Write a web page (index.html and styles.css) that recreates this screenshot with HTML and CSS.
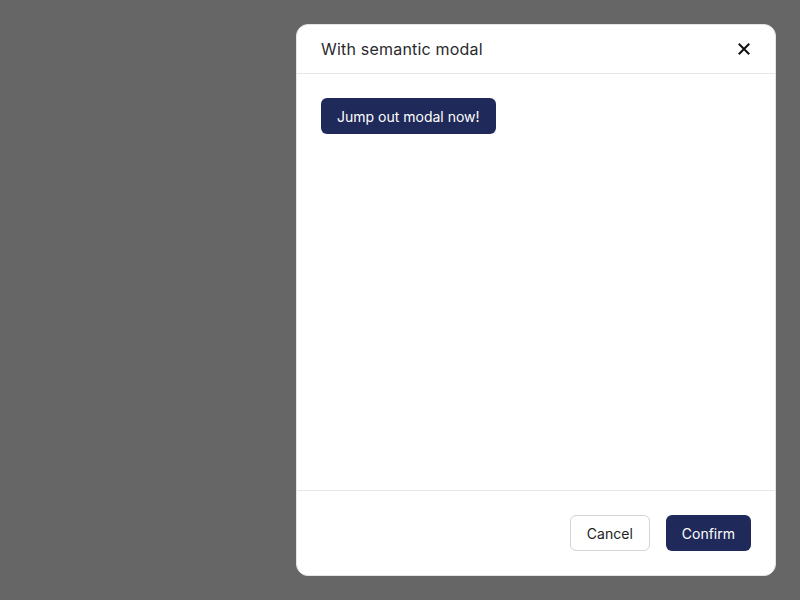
FILE: index.html
```html
<!DOCTYPE html>
<html>
<head>
<meta charset="utf-8">
<link rel="stylesheet" href="styles.css">
</head>
<body>
<div class="overlay">
  <div class="modal" role="dialog" aria-labelledby="modal-title">
    <header class="modal-header">
      <h2 id="modal-title" class="modal-title">With semantic modal</h2>
      <button class="close-btn" aria-label="Close">
        <svg width="12" height="12" viewBox="0 0 12 12"><path d="M1.5 1.5 L10.5 10.5 M10.5 1.5 L1.5 10.5" stroke="#111" stroke-width="2" stroke-linecap="square"/></svg>
      </button>
    </header>
    <div class="modal-body">
      <button class="btn btn-primary">Jump out modal now!</button>
    </div>
    <footer class="modal-footer">
      <button class="btn btn-secondary">Cancel</button>
      <button class="btn btn-primary">Confirm</button>
    </footer>
  </div>
</div>
</body>
</html>
```
FILE: styles.css
```css
html, body {
  margin: 0;
  padding: 0;
  height: 100%;
}
body {
  background: #666666;
  font-family: Inter, "Noto Sans", sans-serif;
}
.overlay {
  display: flex;
  justify-content: flex-end;
  padding: 24px;
  height: 100%;
  box-sizing: border-box;
}
.modal {
  width: 480px;
  height: 552px;
  box-sizing: border-box;
  background: #fff;
  border: 1px solid #e3e3e8;
  border-radius: 12px;
  display: flex;
  flex-direction: column;
}
.modal-header {
  display: flex;
  align-items: center;
  justify-content: space-between;
  height: 48px;
  padding: 0 24px;
  border-bottom: 1px solid #e6e6ea;
}
.modal-title {
  margin: 0;
  font-size: 16px;
  font-weight: 400;
  letter-spacing: 0.2px;
  color: #2a2a2e;
}
.close-btn {
  background: none;
  border: 0;
  padding: 0;
  width: 12px;
  height: 12px;
  display: flex;
  margin-right: 1px;
}
.modal-body {
  flex: 1;
  padding: 24px;
}
.modal-footer {
  display: flex;
  justify-content: flex-end;
  gap: 16px;
  padding: 24px;
  border-top: 1px solid #e6e6ea;
}
.btn {
  height: 36px;
  padding: 0 16px;
  border-radius: 6px;
  font-family: Inter, "Noto Sans", sans-serif;
  font-size: 14px;
  font-weight: 400;
  cursor: pointer;
}
.btn-primary {
  background: #1f2a5a;
  color: #fff;
  border: 0;
}
.btn-secondary {
  background: #fff;
  color: #222;
  border: 1px solid #d4d4d8;
}
```
